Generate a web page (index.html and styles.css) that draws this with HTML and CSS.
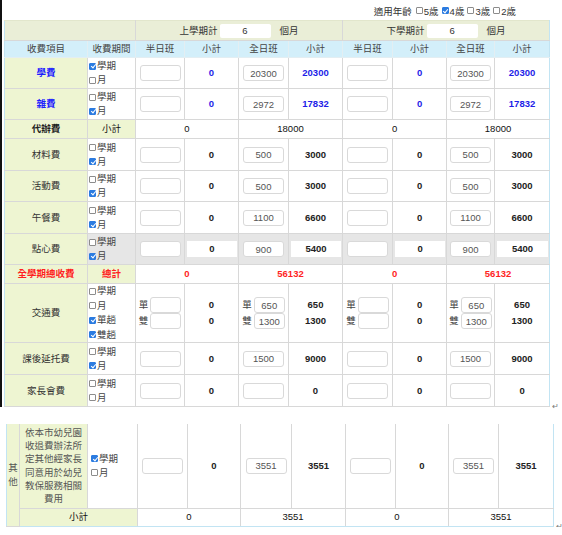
FILE: index.html
```html
<!DOCTYPE html>
<html lang="zh-Hant">
<head>
<meta charset="utf-8">
<title>收費標準表</title>
<link rel="stylesheet" href="styles.css">
</head>
<body>
<div class="sheet">
  <div class="ages"><span class="ages-t">適用年齡</span><label><input type="checkbox">5歲</label><label><input type="checkbox" checked>4歲</label><label><input type="checkbox">3歲</label><label><input type="checkbox">2歲</label></div>
  <div class="tblrow">
    <table class="fee main">
      <colgroup><col><col><col><col><col><col><col><col><col><col></colgroup>
      <tr class="rh1">
        <td colspan="2" class="hd1"></td>
        <td colspan="4" class="hd1"><span class="sem">上學期計<input class="months" value="6">個月</span></td>
        <td colspan="4" class="hd1"><span class="sem">下學期計<input class="months" value="6">個月</span></td>
      </tr>
      <tr class="rh2">
        <th>收費項目</th><th>收費期間</th><th>半日班</th><th>小計</th><th>全日班</th><th>小計</th><th>半日班</th><th>小計</th><th>全日班</th><th>小計</th>
      </tr>
      <tr class="r31 blue">
        <td class="lab strong">學費</td>
        <td class="per"><label><input type="checkbox" checked>學期</label><label><input type="checkbox">月</label></td>
        <td><input class="num"></td><td class="st">0</td>
        <td><input class="num" value="20300"></td><td class="st">20300</td>
        <td><input class="num"></td><td class="st">0</td>
        <td><input class="num" value="20300"></td><td class="st">20300</td>
      </tr>
      <tr class="r31 blue">
        <td class="lab strong">雜費</td>
        <td class="per"><label><input type="checkbox">學期</label><label><input type="checkbox" checked>月</label></td>
        <td><input class="num"></td><td class="st">0</td>
        <td><input class="num" value="2972"></td><td class="st">17832</td>
        <td><input class="num"></td><td class="st">0</td>
        <td><input class="num" value="2972"></td><td class="st">17832</td>
      </tr>
      <tr class="r19 sum">
        <td class="lab strong">代辦費</td>
        <td class="lab">小計</td>
        <td colspan="2">0</td><td colspan="2">18000</td>
        <td colspan="2">0</td><td colspan="2">18000</td>
      </tr>
      <tr class="r32">
        <td class="lab">材料費</td>
        <td class="per"><label><input type="checkbox">學期</label><label><input type="checkbox" checked>月</label></td>
        <td><input class="num"></td><td class="st">0</td>
        <td><input class="num" value="500"></td><td class="st">3000</td>
        <td><input class="num"></td><td class="st">0</td>
        <td><input class="num" value="500"></td><td class="st">3000</td>
      </tr>
      <tr class="r31">
        <td class="lab">活動費</td>
        <td class="per"><label><input type="checkbox">學期</label><label><input type="checkbox" checked>月</label></td>
        <td><input class="num"></td><td class="st">0</td>
        <td><input class="num" value="500"></td><td class="st">3000</td>
        <td><input class="num"></td><td class="st">0</td>
        <td><input class="num" value="500"></td><td class="st">3000</td>
      </tr>
      <tr class="r32">
        <td class="lab">午餐費</td>
        <td class="per"><label><input type="checkbox">學期</label><label><input type="checkbox" checked>月</label></td>
        <td><input class="num"></td><td class="st">0</td>
        <td><input class="num" value="1100"></td><td class="st">6600</td>
        <td><input class="num"></td><td class="st">0</td>
        <td><input class="num" value="1100"></td><td class="st">6600</td>
      </tr>
      <tr class="r31 hover">
        <td class="lab">點心費</td>
        <td class="per"><label><input type="checkbox">學期</label><label><input type="checkbox" checked>月</label></td>
        <td><input class="num"></td><td class="st"><span class="box">0</span></td>
        <td><input class="num" value="900"></td><td class="st"><span class="box">5400</span></td>
        <td><input class="num"></td><td class="st"><span class="box">0</span></td>
        <td><input class="num" value="900"></td><td class="st"><span class="box">5400</span></td>
      </tr>
      <tr class="r19 total">
        <td class="lab">全學期總收費</td>
        <td class="lab">總計</td>
        <td colspan="2">0</td><td colspan="2">56132</td>
        <td colspan="2">0</td><td colspan="2">56132</td>
      </tr>
      <tr class="r59">
        <td class="lab">交通費</td>
        <td class="per four"><label><input type="checkbox">學期</label><label><input type="checkbox">月</label><label><input type="checkbox" checked>單趟</label><label><input type="checkbox" checked>雙趟</label></td>
        <td><span class="pair">單<input class="num sm"></span><span class="pair">雙<input class="num sm"></span></td>
        <td class="st two">0<br>0</td>
        <td><span class="pair">單<input class="num sm" value="650"></span><span class="pair">雙<input class="num sm" value="1300"></span></td>
        <td class="st two">650<br>1300</td>
        <td><span class="pair">單<input class="num sm"></span><span class="pair">雙<input class="num sm"></span></td>
        <td class="st two">0<br>0</td>
        <td><span class="pair">單<input class="num sm" value="650"></span><span class="pair">雙<input class="num sm" value="1300"></span></td>
        <td class="st two">650<br>1300</td>
      </tr>
      <tr class="r32">
        <td class="lab">課後延托費</td>
        <td class="per"><label><input type="checkbox">學期</label><label><input type="checkbox" checked>月</label></td>
        <td><input class="num"></td><td class="st">0</td>
        <td><input class="num" value="1500"></td><td class="st">9000</td>
        <td><input class="num"></td><td class="st">0</td>
        <td><input class="num" value="1500"></td><td class="st">9000</td>
      </tr>
      <tr class="r32">
        <td class="lab">家長會費</td>
        <td class="per"><label><input type="checkbox">學期</label><label><input type="checkbox">月</label></td>
        <td><input class="num"></td><td class="st">0</td>
        <td><input class="num"></td><td class="st">0</td>
        <td><input class="num"></td><td class="st">0</td>
        <td><input class="num"></td><td class="st">0</td>
      </tr>
    </table>
    <span class="ret">↵</span>
  </div>
</div>

<div class="tblrow second">
  <table class="fee other">
    <colgroup><col><col><col><col><col><col><col><col><col><col><col></colgroup>
    <tr class="r84">
      <td rowspan="2" class="lab side">其他</td>
      <td class="lab long">依本市幼兒園收退費辦法所定其他經家長同意用於幼兒教保服務相關費用</td>
      <td class="per wide"><label><input type="checkbox" checked>學期</label><label><input type="checkbox">月</label></td>
      <td><input class="num"></td><td class="st">0</td>
      <td><input class="num" value="3551"></td><td class="st">3551</td>
      <td><input class="num"></td><td class="st">0</td>
      <td><input class="num" value="3551"></td><td class="st">3551</td>
    </tr>
    <tr class="r18 sum">
      <td colspan="2" class="lab">小計</td>
      <td colspan="2">0</td><td colspan="2">3551</td>
      <td colspan="2">0</td><td colspan="2">3551</td>
    </tr>
  </table>
  <span class="ret">↵</span>
</div>
</body>
</html>
```

FILE: styles.css
```css
* { box-sizing: border-box; }

body {
  margin: 0;
  font-family: "Liberation Sans", "Noto Sans CJK TC", sans-serif;
  font-size: 9.5px;
  color: #333;
  background: #fff;
}

input { font: inherit; }

input[type="checkbox"] {
  appearance: none;
  -webkit-appearance: none;
  position: relative;
  display: inline-block;
  width: 7px;
  height: 7px;
  margin: 0 1px 0 0;
  border: 1px solid #8c8c8c;
  border-radius: 1px;
  background: #fff;
  vertical-align: -0.5px;
}
input[type="checkbox"]:checked {
  background: #2b7be0;
  border-color: #2b7be0;
}
input[type="checkbox"]:checked::after {
  content: "";
  position: absolute;
  left: 1.5px;
  top: -0.5px;
  width: 2px;
  height: 4px;
  border: solid #fff;
  border-width: 0 1px 1px 0;
  transform: rotate(40deg);
}

.sheet {
  border-left: 2px solid #111;
  padding-left: 2px;
}

.ages {
  display: flex;
  justify-content: flex-end;
  align-items: center;
  height: 20px;
  padding: 1px 46px 0 0;
  color: #333;
}
.ages label {
  display: inline-flex;
  align-items: center;
  margin-left: 3px;
}
.ages-t { margin-right: 1px; }

.tblrow {
  display: flex;
  align-items: flex-end;
}

.ret {
  font-size: 8px;
  line-height: 8px;
  color: #777;
  margin: 0 0 -4px 2px;
}

.fee {
  border-collapse: collapse;
  table-layout: fixed;
}

.fee td, .fee th {
  border: 1px solid #d8d8d8;
  padding: 0;
  text-align: center;
  vertical-align: middle;
  line-height: 12px;
  font-weight: normal;
  color: #333;
}

.main { width: 545px; }
.main col:nth-child(1) { width: 83px; }
.main col:nth-child(2) { width: 48px; }
.main col:nth-child(3) { width: 49px; }
.main col:nth-child(4) { width: 54px; }
.main col:nth-child(5) { width: 50px; }
.main col:nth-child(6) { width: 54px; }
.main col:nth-child(7) { width: 50px; }
.main col:nth-child(8) { width: 54px; }
.main col:nth-child(9) { width: 48px; }
.main col:nth-child(10) { width: 55px; }

.fee tr > :first-child { border-left-color: #c2e4f3; }
.fee tr > :last-child { border-right-color: #c2e4f3; }

.rh1 td { height: 20px; background: #eaeed7; border-top-color: #e2e6cc; }
.rh2 th { height: 17px; background: #d3effa; color: #444; border-color: #e3eef2; }
.r31 td { height: 31px; }
.r32 td { height: 32px; }
.r19 td { height: 19px; }
.r59 td { height: 59px; }
.r84 td { height: 84px; }
.r18 td { height: 18px; }

.sem {
  display: inline-flex;
  align-items: center;
  color: #333;
}
.months {
  width: 51px;
  height: 14px;
  margin: 0 9px 0 2px;
  border: 0;
  border-radius: 2px;
  padding: 0;
  background: #fff;
  text-align: center;
  color: #333;
}

.lab {
  background: #eef5d2;
  color: #555;
}
.fee td.strong { font-weight: bold; color: #222; }

.fee .blue td.lab { color: #1d1dff; }
.fee .blue td.st { color: #1d1de8; }

.fee td.per { text-align: left; padding-left: 1px; }
.per label {
  display: block;
  line-height: 14px;
  color: #444;
}
.per.four label { line-height: 14.5px; }
.fee td.per.wide { padding-left: 3px; }

.num {
  display: block;
  width: 41px;
  height: 16px;
  margin: 0 auto;
  padding: 0;
  border: 1px solid #d9d9d9;
  border-radius: 3px;
  background: #fff;
  text-align: center;
  color: #555;
}

.fee td.st { font-weight: bold; color: #222; }
.fee td.two { line-height: 16px; }

.sum td { color: #111; }
.fee .sum td.strong { color: #222; }

.fee .total td { color: #ff1f1f; font-weight: bold; }

.hover td { background: #e6e6e6; }
.hover td.lab { background: #eef5d2; }
.box {
  display: block;
  height: 16px;
  line-height: 16px;
  margin: 0 1px 0 2px;
  background: #fff;
}

.pair {
  display: flex;
  align-items: center;
  justify-content: center;
  gap: 2px;
  height: 16px;
  color: #444;
}
.num.sm {
  width: 31px;
  margin: 0;
}

.second { margin: 17px 0 0 6px; }

.other { width: 547px; }
.other col:nth-child(1) { width: 13px; }
.other col:nth-child(2) { width: 68px; }
.other col:nth-child(3) { width: 50px; }
.other col:nth-child(4) { width: 50px; }
.other col:nth-child(5) { width: 53px; }
.other col:nth-child(6) { width: 51px; }
.other col:nth-child(7) { width: 54px; }
.other col:nth-child(8) { width: 50px; }
.other col:nth-child(9) { width: 53px; }
.other col:nth-child(10) { width: 50px; }
.other col:nth-child(11) { width: 55px; }
.other tr:first-child td { border-top: 0; }
.other tr:last-child td { border-bottom-color: #c2e4f3; }

.fee td.side { line-height: 14px; color: #555; }
.fee td.long {
  padding: 0 5px;
  line-height: 13.3px;
  color: #555;
}
```
